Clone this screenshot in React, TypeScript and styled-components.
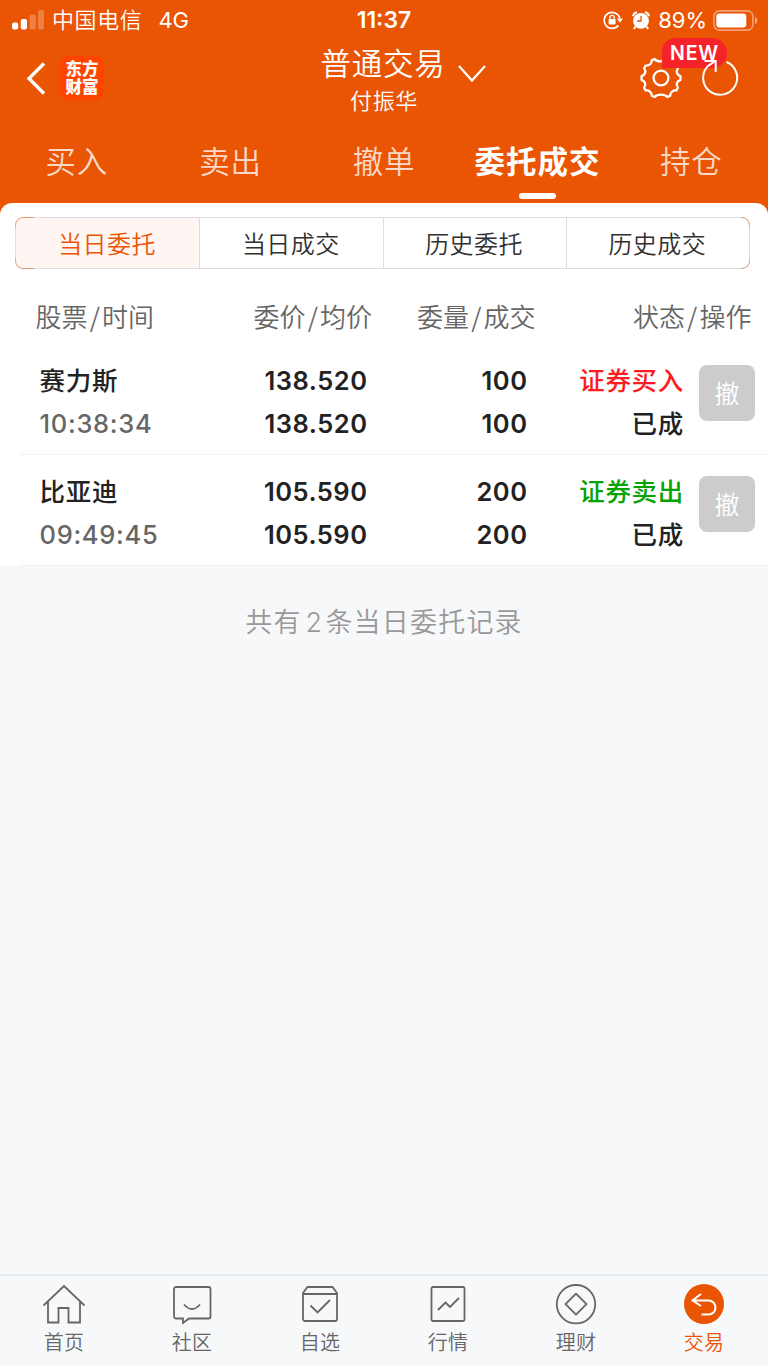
import React from 'react';
import styled, { createGlobalStyle } from 'styled-components';

const Global = createGlobalStyle`
  * { box-sizing: border-box; }
  body { margin: 0; background: #f7f8fa; font-family: Inter, "Noto Sans CJK SC", sans-serif; }
`;

const cjk = '"Noto Sans CJK SC", sans-serif';

const Screen = styled.div`
  width: 768px;
  height: 1366px;
  display: flex;
  flex-direction: column;
  background: #f7f8fa;
  overflow: hidden;
`;
const Header = styled.header`
  height: 203px;
  flex: none;
  background: #ea5504;
  color: #fff;
  display: flex;
  flex-direction: column;
`;
const StatusBar = styled.div`
  height: 40px;
  display: grid;
  grid-template-columns: 1fr auto 1fr;
  align-items: center;
  padding: 0 10px 0 12px;
`;
const StatusGroup = styled.div<{ $end?: boolean }>`
  display: flex;
  align-items: center;
  justify-content: ${(p) => (p.$end ? 'flex-end' : 'flex-start')};
  font-size: 22px;
  line-height: 40px;
`;
const Carrier = styled.span`
  font: 350 22px/36px ${cjk};
  padding-bottom: 4px;
  letter-spacing: 0.6px;
  margin: 0 16px 0 8px;
`;
const Clock = styled.span`
  font-size: 23px;
  font-weight: 600;
  padding-right: 2px;
`;
const Percent = styled.span`
  margin: 0 6px 0 8px;
`;
const TitleBar = styled.div`
  height: 80px;
  display: grid;
  grid-template-columns: 1fr auto 1fr;
`;
const TitleLeft = styled.div`
  display: flex;
  align-items: center;
  padding: 0 0 4px 25px;
  gap: 13px;
`;
const Logo = styled.div`
  width: 44px;
  height: 44px;
  border-radius: 8px;
  background: #ff4400;
  font: 900 16.5px/18px ${cjk};
  text-align: center;
  padding-top: 3px;
`;
const TitleCentre = styled.div`
  display: flex;
  flex-direction: column;
  align-items: center;
`;
const TitleRow = styled.div`
  display: flex;
  align-items: center;
  height: 45px;
  padding-left: 40px;
  gap: 12px;
`;
const Title = styled.h1`
  margin: 0;
  font: 350 30.5px/44px ${cjk};
  padding-bottom: 1px;
  letter-spacing: 0.7px;
`;
const Account = styled.div`
  font: 350 22px/28px ${cjk};
  letter-spacing: 0.6px;
`;
const TitleRight = styled.div`
  display: flex;
  align-items: center;
  justify-content: flex-end;
  padding: 0 29.5px 4px 0;
  gap: 18.5px;
  position: relative;
`;
const Badge = styled.span`
  position: absolute;
  right: 41px;
  top: -2px;
  width: 65px;
  height: 30px;
  border-radius: 13px 15px 15px 0;
  background: #f5222a;
  font-size: 19.5px;
  font-weight: 600;
  line-height: 30px;
  letter-spacing: 0.8px;
  text-align: center;
`;
const OverBadge = styled.div`
  position: relative;
  display: flex;
`;
const Tabs = styled.nav`
  flex: 1;
  display: grid;
  grid-template-columns: repeat(5, 153.6px);
`;
const Tab = styled.div<{ $active?: boolean }>`
  display: flex;
  flex-direction: column;
  align-items: center;
  font: ${(p) => (p.$active ? 700 : 350)} 30.5px/80px ${cjk};
  letter-spacing: ${(p) => (p.$active ? 1 : 0.7)}px;
  color: ${(p) => (p.$active ? '#fff' : 'rgba(255,255,255,0.78)')};
`;
const Marker = styled.i`
  width: 37px;
  height: 6px;
  border-radius: 3px;
  background: #fff;
  margin-top: -7px;
`;
const PanelBack = styled.div`
  background: #ea5504;
`;
const Panel = styled.main`
  background: #fff;
  border-radius: 12px 12px 0 0;
  padding-top: 14px;
`;
const Segments = styled.div`
  margin: 0 18px 0 15px;
  height: 52px;
  display: grid;
  grid-template-columns: repeat(4, 1fr);
  border: 1px solid #dcdce2;
  border-radius: 8px;
  position: relative;
  &::before, &::after {
    content: "";
    position: absolute;
    top: -1px;
    bottom: -1px;
    border: 1px solid rgba(234, 85, 4, 0.5);
    mask: linear-gradient(#000 7px, transparent 12px calc(100% - 12px), #000 calc(100% - 7px));
  }
  &::before { left: -1px; width: 18px; border-right: 0; border-radius: 8px 0 0 8px; }
  &::after { right: -1px; width: 8px; border-left: 0; border-radius: 0 8px 8px 0; }
`;
const Segment = styled.div<{ $active?: boolean }>`
  font: 350 24px/50px ${cjk};
  letter-spacing: 0.5px;
  padding-right: 1px;
  text-align: center;
  color: ${(p) => (p.$active ? '#ea5504' : '#303030')};
  background: ${(p) => (p.$active ? '#fff5f2' : 'transparent')};
  border-radius: ${(p) => (p.$active ? '7px 0 0 7px' : 0)};
  & + & { border-left: 1px solid #dcdce2; }
`;
const Columns = styled.div`
  display: grid;
  grid-template-columns: 188px 148.5px 164.5px 215px;
  padding: 0 16.5px 0 35.5px;
  height: 75px;
  font: 350 26px/94px ${cjk};
  color: #666;
`;
const ColumnName = styled.span<{ $end?: boolean; $shift: number }>`
  text-align: ${(p) => (p.$end ? 'right' : 'left')};
  padding-left: ${(p) => p.$shift}px;
  white-space: nowrap;
`;
const Slash = styled.span`
  margin: 0 2.2px;
`;
const Order = styled.section`
  height: 111px;
  margin-left: 19px;
  padding: 0 13px 0 20.5px;
  border-bottom: 1px solid #f1f2f4;
  display: grid;
  grid-template-columns: 160px 168px 160px 156.5px 71px;
  justify-content: start;
`;
const CancelCell = styled.div`
  padding: 21px 0 0 15px;
`;
const Cell = styled.div<{ $end?: boolean }>`
  padding-top: 15px;
  text-align: ${(p) => (p.$end ? 'right' : 'left')};
`;
const Words = styled.div<{ $color?: string }>`
  font: 500 25.5px/40px ${cjk};
  padding-bottom: 3px;
  letter-spacing: 0.7px;
  color: ${(p) => p.$color ?? '#222'};
`;
const Digits = styled.div<{ $muted?: boolean }>`
  font-size: 25.5px;
  line-height: 43px;
  font-weight: ${(p) => (p.$muted ? 500 : 600)};
  letter-spacing: ${(p) => (p.$muted ? 0.7 : 0.5)}px;
  color: ${(p) => (p.$muted ? '#666' : '#222')};
`;
const Cancel = styled.button`
  display: block;
  width: 56px;
  height: 56px;
  padding: 0 0 2px;
  border: 0;
  border-radius: 8px;
  background: #ccc;
  color: #fff;
  font: 350 25px/54px ${cjk};
`;
const Summary = styled.p`
  flex: 1;
  margin: 0;
  padding-top: 33px;
  text-align: center;
  font: 350 27px/44px ${cjk};
  letter-spacing: 1.2px;
  color: #999;
`;
const Count = styled.span`
  font-family: Inter, sans-serif;
  margin: 0 2px 0 4px;
`;
const NavBar = styled.footer`
  height: 92px;
  border-top: 2px solid #e6e9eb;
  display: grid;
  grid-template-columns: repeat(6, 1fr);
`;
const NavItem = styled.div<{ $active?: boolean }>`
  display: flex;
  flex-direction: column;
  align-items: center;
  padding-top: 8px;
  color: ${(p) => (p.$active ? '#ea5504' : '#666')};
  font: 350 20px/32px ${cjk};
  letter-spacing: 0.3px;
`;

const stroke = { fill: 'none', stroke: 'currentColor', strokeWidth: 1.8 } as const;

const Signal = () => (
  <svg width="32" height="20" viewBox="0 0 32 20" fill="#fff">
    <rect x="0" y="12.5" width="6.2" height="7" rx="2" />
    <rect x="8.8" y="9" width="6.2" height="10.5" rx="2" />
    <rect x="17.6" y="4.5" width="6.2" height="15" rx="2" opacity=".25" />
    <rect x="26" y="0" width="6" height="19.5" rx="2" opacity=".25" />
  </svg>
);
const RotationLock = () => (
  <svg width="20" height="20" viewBox="0 0 20 20">
    <path d="M15.4 15.4A8 8 0 1 1 16.8 8" fill="none" stroke="#fff" strokeWidth="1.7" />
    <path d="M13.8 8.4H20L17 12.8Z" fill="#fff" />
    <rect x="5.6" y="9" width="7" height="5.4" rx=".8" fill="#fff" />
    <path d="M7 9V7.4a2.1 2.1 0 0 1 4.2 0V9" fill="none" stroke="#fff" strokeWidth="1.3" />
  </svg>
);
const Alarm = () => (
  <svg width="18" height="19" viewBox="0 0 18 19" style={{ marginLeft: 9 }}>
    <circle cx="9" cy="9.8" r="7.9" fill="#fff" />
    <path d="M1 5.2A5 5 0 0 1 5 1.2M17 5.2A5 5 0 0 0 13 1.2M3.5 15.5L1.8 18M14.5 15.5l1.7 2.5" stroke="#fff" strokeWidth="2" fill="none" />
    <path d="M9 5v5H5" fill="none" stroke="#ea5504" strokeWidth="1.3" />
  </svg>
);
const Battery = () => (
  <svg width="45" height="21" viewBox="0 0 45 21">
    <rect x=".9" y=".9" width="39" height="19.2" rx="5.5" fill="none" stroke="#fff" strokeOpacity=".45" strokeWidth="1.6" />
    <rect x="3.3" y="3.5" width="30" height="14" rx="3" fill="#fff" />
    <path d="M42 7v7c3-1.2 3-5.8 0-7Z" fill="#fff" fillOpacity=".5" />
  </svg>
);
const Back = () => (
  <svg width="22" height="34" viewBox="0 0 22 34">
    <path d="M19 2.5L4 17.5L19 32.5" fill="none" stroke="#fff" strokeWidth="3.4" />
  </svg>
);
const Chevron = () => (
  <svg width="30" height="20" viewBox="0 0 30 20" style={{ marginTop: 22 }}>
    <path d="M2 2L15 16.5L28 2" fill="none" stroke="#fff" strokeWidth="2.2" />
  </svg>
);
const Gear = () => (
  <svg width="42" height="42" viewBox="0 0 42 42" fill="none" stroke="#fff" strokeWidth="2.3" strokeLinejoin="round">
    <path d="M14.6 2C17 5.2 25 5.2 27.4 2L30.2 3.2C30.2 7 33 9 36.4 8.6L37.9 11.4C35.4 14.5 37 18 40.5 19.2V22.8C37 24 35.4 27.5 37.9 30.6L36.4 33.4C33 33 30.2 35 30.2 38.8L27.4 40C25 36.8 17 36.8 14.6 40L11.8 38.8C11.8 35 9 33 5.6 33.4L4.1 30.6C6.6 27.5 5 24 1.5 22.8V19.2C5 18 6.6 14.5 4.1 11.4L5.6 8.6C9 9 11.8 7 11.8 3.2Z" />
    <circle cx="21" cy="21" r="7.4" />
  </svg>
);
const Refresh = () => (
  <svg width="38" height="42" viewBox="0 0 38 42" fill="none" stroke="#fff" strokeWidth="2">
    <path d="M25.5 5A17 17 0 1 1 6.8 9.1L14.5 4" />
    <path d="M3.5 4H14.7V15" />
  </svg>
);

const icons: Record<string, React.ReactNode> = {
  home: <path d="M1.5 21.5L22 2L42.5 21.5M6 18V38.5H16.5V24H26.5V38.5H38V18" />,
  chat: <><path d="M5.5 3H38.5a2 2 0 0 1 2 2V32.5a2 2 0 0 1-2 2H19L13 39V34.5H6a2 2 0 0 1-2-2V5a2 2 0 0 1 2-2Z" /><path d="M14 20.5Q22 29.5 30 20.5" /></>,
  pick: <><path d="M5 9L9.5 3H34.5L39 9V35a2 2 0 0 1-2 2H7a2 2 0 0 1-2-2ZM5 10H39" /><path d="M12.5 21.5L19.5 28.5L32 16" /></>,
  market: <><rect x="5.5" y="3" width="33" height="34" rx="1.5" /><path d="M12 26L19.5 18.5L24 23L33 14" /></>,
  wealth: <><circle cx="22" cy="20.2" r="19.2" /><path d="M22 9.7L32.5 20.2L22 30.7L11.5 20.2Z" strokeLinejoin="round" /></>,
};
const TradeIcon = () => (
  <svg width="44" height="42" viewBox="0 0 44 42">
    <circle cx="22" cy="20" r="20" fill="#ea5504" />
    <path d="M19 10L10.5 16.5L19 22M11 16.5H26.5a7 7 0 0 1 0 14H19.5" fill="none" stroke="#fff" strokeWidth="2" />
  </svg>
);

const tabs = ['买入', '卖出', '撤单', '委托成交', '持仓'];
const segments = ['当日委托', '当日成交', '历史委托', '历史成交'];
const columns = [['股票', '时间'], ['委价', '均价'], ['委量', '成交'], ['状态', '操作']];
const offsets = [0, 30, 45, 0];
const orders = [
  { name: '赛力斯', time: '10:38:34', price: '138.520', qty: '100', side: '证券买入', color: '#fb1d23' },
  { name: '比亚迪', time: '09:49:45', price: '105.590', qty: '200', side: '证券卖出', color: '#06a206' },
];
const nav = [['home', '首页'], ['chat', '社区'], ['pick', '自选'], ['market', '行情'], ['wealth', '理财'], ['trade', '交易']];

export default function App() {
  return (
    <Screen>
      <Global />
      <Header>
        <StatusBar>
          <StatusGroup><Signal /><Carrier>中国电信</Carrier><span>4G</span></StatusGroup>
          <Clock>11:37</Clock>
          <StatusGroup $end><RotationLock /><Alarm /><Percent>89%</Percent><Battery /></StatusGroup>
        </StatusBar>
        <TitleBar>
          <TitleLeft><Back /><Logo>东方<br />财富</Logo></TitleLeft>
          <TitleCentre>
            <TitleRow><Title>普通交易</Title><Chevron /></TitleRow>
            <Account>付振华</Account>
          </TitleCentre>
          <TitleRight><Gear /><Badge>NEW</Badge><OverBadge><Refresh /></OverBadge></TitleRight>
        </TitleBar>
        <Tabs>
          {tabs.map((t, i) => <Tab key={t} $active={i === 3}>{t}{i === 3 && <Marker />}</Tab>)}
        </Tabs>
      </Header>
      <PanelBack>
        <Panel>
          <Segments>{segments.map((s, i) => <Segment key={s} $active={i === 0}>{s}</Segment>)}</Segments>
          <Columns>
            {columns.map(([a, b], i) => (
              <ColumnName key={a} $end={i === 3} $shift={offsets[i]}>{a}<Slash>/</Slash>{b}</ColumnName>
            ))}
          </Columns>
          {orders.map((o) => (
            <Order key={o.name}>
              <Cell><Words>{o.name}</Words><Digits $muted>{o.time}</Digits></Cell>
              <Cell $end><Digits>{o.price}</Digits><Digits>{o.price}</Digits></Cell>
              <Cell $end><Digits>{o.qty}</Digits><Digits>{o.qty}</Digits></Cell>
              <Cell $end><Words $color={o.color}>{o.side}</Words><Words>已成</Words></Cell>
              <CancelCell><Cancel>撤</Cancel></CancelCell>
            </Order>
          ))}
        </Panel>
      </PanelBack>
      <Summary>共有<Count>2</Count>条当日委托记录</Summary>
      <NavBar>
        {nav.map(([k, label]) => (
          <NavItem key={k} $active={k === 'trade'}>
            {k === 'trade' ? <TradeIcon /> : <svg width="44" height="42" viewBox="0 0 44 42" {...stroke}>{icons[k]}</svg>}
            <span>{label}</span>
          </NavItem>
        ))}
      </NavBar>
    </Screen>
  );
}
